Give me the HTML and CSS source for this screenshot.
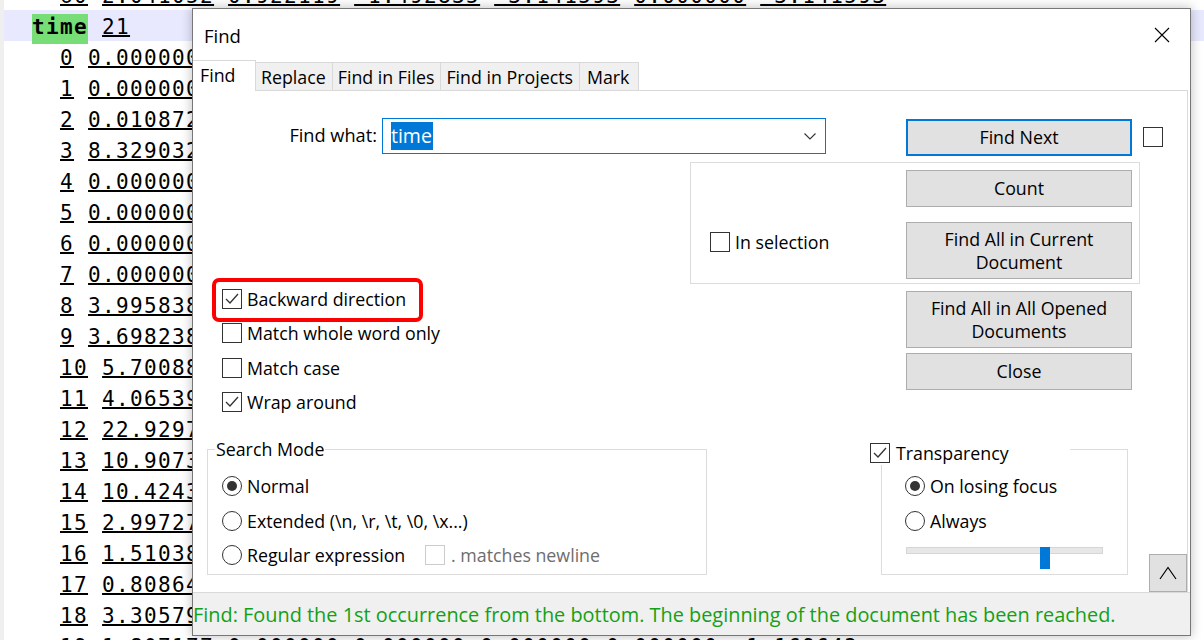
FILE: index.html
```html
<!DOCTYPE html>
<html>
<head>
<meta charset="utf-8">
<title>Find</title>
<link rel="stylesheet" href="styles.css">
</head>
<body>
<div class="editor">
  <div class="line">  <span class="t">60</span> <span class="t">2.041052</span> <span class="t">0.922119</span> <span class="t">-1.492835</span> <span class="t">-3.141593</span> <span class="t">0.000000</span> <span class="t">-3.141593</span></div>
  <div class="line current"><span class="hl">time</span> <span class="t">21</span></div>
  <div class="line">  <span class="t">0</span> <span class="t">0.000000</span> <span class="t">0.000000</span></div>
  <div class="line">  <span class="t">1</span> <span class="t">0.000000</span> <span class="t">0.000000</span></div>
  <div class="line">  <span class="t">2</span> <span class="t">0.010872</span> <span class="t">0.000000</span></div>
  <div class="line">  <span class="t">3</span> <span class="t">8.329032</span> <span class="t">0.000000</span></div>
  <div class="line">  <span class="t">4</span> <span class="t">0.000000</span> <span class="t">0.000000</span></div>
  <div class="line">  <span class="t">5</span> <span class="t">0.000000</span> <span class="t">0.000000</span></div>
  <div class="line">  <span class="t">6</span> <span class="t">0.000000</span> <span class="t">0.000000</span></div>
  <div class="line">  <span class="t">7</span> <span class="t">0.000000</span> <span class="t">0.000000</span></div>
  <div class="line">  <span class="t">8</span> <span class="t">3.995838</span> <span class="t">0.000000</span></div>
  <div class="line">  <span class="t">9</span> <span class="t">3.698238</span> <span class="t">0.000000</span></div>
  <div class="line">  <span class="t">10</span> <span class="t">5.700880</span> <span class="t">0.000000</span></div>
  <div class="line">  <span class="t">11</span> <span class="t">4.065390</span> <span class="t">0.000000</span></div>
  <div class="line">  <span class="t">12</span> <span class="t">22.929700</span> <span class="t">0.000000</span></div>
  <div class="line">  <span class="t">13</span> <span class="t">10.907300</span> <span class="t">0.000000</span></div>
  <div class="line">  <span class="t">14</span> <span class="t">10.424300</span> <span class="t">0.000000</span></div>
  <div class="line">  <span class="t">15</span> <span class="t">2.997270</span> <span class="t">0.000000</span></div>
  <div class="line">  <span class="t">16</span> <span class="t">1.510380</span> <span class="t">0.000000</span></div>
  <div class="line">  <span class="t">17</span> <span class="t">0.808640</span> <span class="t">0.000000</span></div>
  <div class="line">  <span class="t">18</span> <span class="t">3.305790</span> <span class="t">0.000000</span></div>
  <div class="line">  <span class="t">19</span> <span class="t">1.807177</span> <span class="t">0.000000</span> <span class="t">0.000000</span> <span class="t">0.000000</span> <span class="t">0.000000</span> <span class="t">-1.169643</span></div>
</div>

<div class="dialog">
  <div class="titlebar">
    <span class="title">Find</span>
    <svg class="close" width="16" height="16" viewBox="0 0 16 16"><path d="M1 1 L15 15 M15 1 L1 15" stroke="#000" stroke-width="1.1" fill="none"/></svg>
  </div>
  <div class="tabs">
    <div class="tab active">Find</div>
    <div class="tab">Replace</div>
    <div class="tab">Find in Files</div>
    <div class="tab">Find in Projects</div>
    <div class="tab last">Mark</div>
    <div class="tab-fill"></div>
  </div>
  <div class="panel">
    <div class="row-find">
      <div class="lbl">Find what:</div>
      <div class="combo">
        <span class="sel">time</span>
        <svg class="chev" width="12" height="7" viewBox="0 0 12 7"><polyline points="0.5,0.5 6,6 11.5,0.5" stroke="#333" stroke-width="1.1" fill="none"/></svg>
      </div>
      <div class="btn default">Find Next</div>
      <span class="box lone"></span>
    </div>

    <div class="middle">
      <div class="opts">
        <div class="chk">
          <span class="box"><svg width="18" height="18" viewBox="0 0 18 18"><polyline points="3,9 7,13 15,4" stroke="#333" stroke-width="1.3" fill="none"/></svg></span>
          <span>Backward direction</span>
          <span class="redbox"></span>
        </div>
        <div class="chk"><span class="box"></span><span>Match whole word only</span></div>
        <div class="chk"><span class="box"></span><span>Match case</span></div>
        <div class="chk">
          <span class="box"><svg width="18" height="18" viewBox="0 0 18 18"><polyline points="3,9 7,13 15,4" stroke="#333" stroke-width="1.3" fill="none"/></svg></span>
          <span>Wrap around</span>
        </div>
      </div>
      <div class="actions">
        <div class="selgroup">
          <div class="chk insel"><span class="box"></span><span>In selection</span></div>
          <div class="stack">
            <div class="btn">Count</div>
            <div class="btn tall">Find All in Current<br>Document</div>
          </div>
        </div>
        <div class="btn tall opened">Find All in All Opened<br>Documents</div>
        <div class="btn closebtn">Close</div>
      </div>
    </div>

    <div class="bottom">
      <div class="group mode">
        <span class="legend">Search Mode</span>
        <div class="radio"><span class="dot on"></span><span>Normal</span></div>
        <div class="radio"><span class="dot"></span><span>Extended (\n, \r, \t, \0, \x...)</span></div>
        <div class="radio">
          <span class="rx"><span class="dot"></span><span>Regular expression</span></span>
          <span class="box disabled"></span><span class="dim">. matches newline</span>
        </div>
      </div>
      <div class="group transp">
        <div class="tlegend">
          <span class="box"><svg width="18" height="18" viewBox="0 0 18 18"><polyline points="3,9 7,13 15,4" stroke="#333" stroke-width="1.3" fill="none"/></svg></span>
          <span>Transparency</span>
        </div>
        <div class="radio r35"><span class="dot on"></span><span>On losing focus</span></div>
        <div class="radio r35"><span class="dot"></span><span>Always</span></div>
        <div class="slider"><div class="track"></div><div class="thumb"></div></div>
      </div>
      <div class="btn up"><svg width="18" height="14" viewBox="0 0 18 14"><polyline points="1,13 9,1.5 17,13" stroke="#000" stroke-width="1.2" fill="none"/></svg></div>
    </div>
  </div>
  <div class="status">Find: Found the 1st occurrence from the bottom. The beginning of the document has been reached.</div>
</div>
</body>
</html>
```

FILE: styles.css
```css
* { box-sizing: border-box; }
html, body { margin: 0; padding: 0; }
body {
  width: 1204px;
  height: 640px;
  overflow: hidden;
  background: #fff;
  position: relative;
}

/* editor behind the dialog */
.editor {
  margin-top: -21px;
  border-left: 4px solid #efefef;
  font-family: "DejaVu Sans Mono", monospace;
  font-size: 21px;
  letter-spacing: 1.357px;
  color: #000;
}
.line {
  height: 31px;
  line-height: 31px;
  padding-top: 2px;
  white-space: pre;
  padding-left: 28px;
}
.line.current { background: #e8e8ff; }
.t {
  text-decoration: underline;
  text-decoration-thickness: 2px;
  text-underline-offset: 1px;
}
.hl {
  background: #77dd77;
  font-weight: bold;
  padding: 1px 0 5px;
}

/* dialog window */
.dialog {
  position: absolute;
  left: 192px;
  top: 8px;
  width: 999px;
  height: 628px;
  background: #fff;
  border: 1px solid #777;
  box-shadow: 0 0 10px 1px rgba(0,0,0,0.22);
  display: flex;
  flex-direction: column;
  font-family: "Open Sans", "Noto Sans", sans-serif;
  font-size: 17.8px;
  color: #000;
}
.titlebar {
  height: 51px;
  flex: none;
  display: flex;
  align-items: center;
  justify-content: space-between;
  padding: 0 20px 0 11px;
}
.title { font-size: 18.5px; padding-top: 2px; }
.close { margin-top: 1px; }

.tabs {
  height: 31px;
  flex: none;
  display: flex;
  align-items: flex-end;
}
.tab {
  height: 29px;
  padding: 0 6px 0 5px;
  background: #f0f0f0;
  border: 1px solid #d9d9d9;
  border-left: none;
  display: flex;
  align-items: center;
  white-space: nowrap;
}
.tab.last { padding: 0 9px 0 7px; }
.tab.active {
  height: 31px;
  width: 63px;
  background: #fff;
  border-bottom: none;
  padding: 0 0 0 7px;
  align-items: flex-start;
  padding-top: 2px;
}
.tab-fill {
  flex: 1;
  height: 1px;
  margin-right: 2px;
  border-bottom: 1px solid #d9d9d9;
}

.panel {
  flex: 1;
  margin-right: 2px;
  border-right: 1px solid #d9d9d9;
  display: flex;
  flex-direction: column;
}

.row-find {
  display: flex;
  align-items: flex-start;
  margin-top: 27px;
}
.lbl {
  width: 184px;
  text-align: right;
  line-height: 34px;
  font-size: 18.2px;
}
.combo {
  width: 444px;
  height: 36px;
  margin-left: 5px;
  border: 1px solid #0078d7;
  display: flex;
  align-items: center;
  padding: 0 9px 0 8px;
}
.sel {
  background: #0078d7;
  color: #fff;
  height: 28px;
  line-height: 28px;
  padding: 0 1px 0 0;
  font-size: 19.5px;
}
.chev { margin-left: auto; }

.btn {
  width: 226px;
  height: 37px;
  background: #e1e1e1;
  border: 1px solid #adadad;
  display: flex;
  align-items: center;
  justify-content: center;
  text-align: center;
  line-height: 23px;
}
.btn.tall { height: 57px; }
.btn.default {
  border: 2px solid #0078d7;
  margin: 1px 0 0 80px;
}
.box {
  width: 20px;
  height: 20px;
  flex: none;
  border: 1px solid #333;
  background: #fff;
  display: inline-block;
}
.box svg { display: block; }
.box.lone { margin: 9px 0 0 11px; }
.box.disabled { border-color: #cccccc; margin-right: 1px; }

.middle {
  display: flex;
  margin-top: 6px;
}
.opts {
  width: 497px;
  padding: 120px 0 0 29px;
}
.chk {
  display: flex;
  align-items: center;
  height: 34.33px;
  gap: 5px;
  position: relative;
}
.redbox {
  position: absolute;
  left: -10px;
  top: -4px;
  width: 211px;
  height: 44px;
  border: 4px solid #ff0000;
  border-radius: 7px;
}

.actions {
  display: flex;
  flex-direction: column;
}
.selgroup {
  width: 450px;
  height: 122px;
  border: 1px solid #dcdcdc;
  display: flex;
  align-items: flex-start;
  padding: 7px 7px 0 19px;
}
.insel { margin-top: 55px; }
.stack {
  margin-left: auto;
  display: flex;
  flex-direction: column;
  gap: 15px;
}
.actions .opened { margin: 7px 0 0 216px; }
.actions .closebtn { margin: 5px 0 0 216px; }

.bottom {
  margin-top: auto;
  display: flex;
  align-items: flex-start;
}
.group {
  position: relative;
  height: 126px;
  border: 1px solid #dcdcdc;
}
.mode {
  width: 500px;
  margin-left: 14px;
  padding: 19px 0 0 14px;
}
.legend {
  position: absolute;
  left: 7px;
  top: -13px;
  background: #fff;
  padding: 0 1px;
  line-height: 24px;
}
.radio {
  display: flex;
  align-items: center;
  height: 34.5px;
  gap: 5px;
}
.radio.r35 { height: 35px; }
.dot {
  width: 20px;
  height: 20px;
  flex: none;
  border: 1px solid #333;
  border-radius: 50%;
  background: #fff;
  position: relative;
}
.dot.on::after {
  content: "";
  position: absolute;
  left: 4px;
  top: 4px;
  width: 10px;
  height: 10px;
  border-radius: 50%;
  background: #333;
}
.rx {
  display: flex;
  align-items: center;
  gap: 5px;
  width: 198px;
}
.dim { color: #6d6d6d; }

.transp {
  width: 247px;
  margin-left: 174px;
  padding: 18.5px 0 0 23px;
}
.tlegend {
  position: absolute;
  left: -14px;
  top: -10px;
  width: 202px;
  height: 25px;
  background: #fff;
  display: flex;
  align-items: center;
  padding-left: 2px;
  gap: 6px;
}
.slider {
  position: relative;
  width: 197px;
  height: 22px;
  margin: 1.5px 0 0 1px;
}
.track {
  margin-top: 8px;
  height: 7px;
  border: 1px solid #d6d6d6;
  background: #e7e7e7;
}
.thumb {
  position: absolute;
  left: 134px;
  top: 0;
  width: 10px;
  height: 22px;
  background: #0078d7;
}
.btn.up {
  width: 38px;
  height: 38px;
  margin: 105px 0 0 21px;
}

.status {
  height: 43px;
  flex: none;
  border-top: 1px solid #dadada;
  background: #f0f0f0;
  color: #14a014;
  display: flex;
  align-items: center;
  font-size: 19.9px;
  white-space: nowrap;
}
```
